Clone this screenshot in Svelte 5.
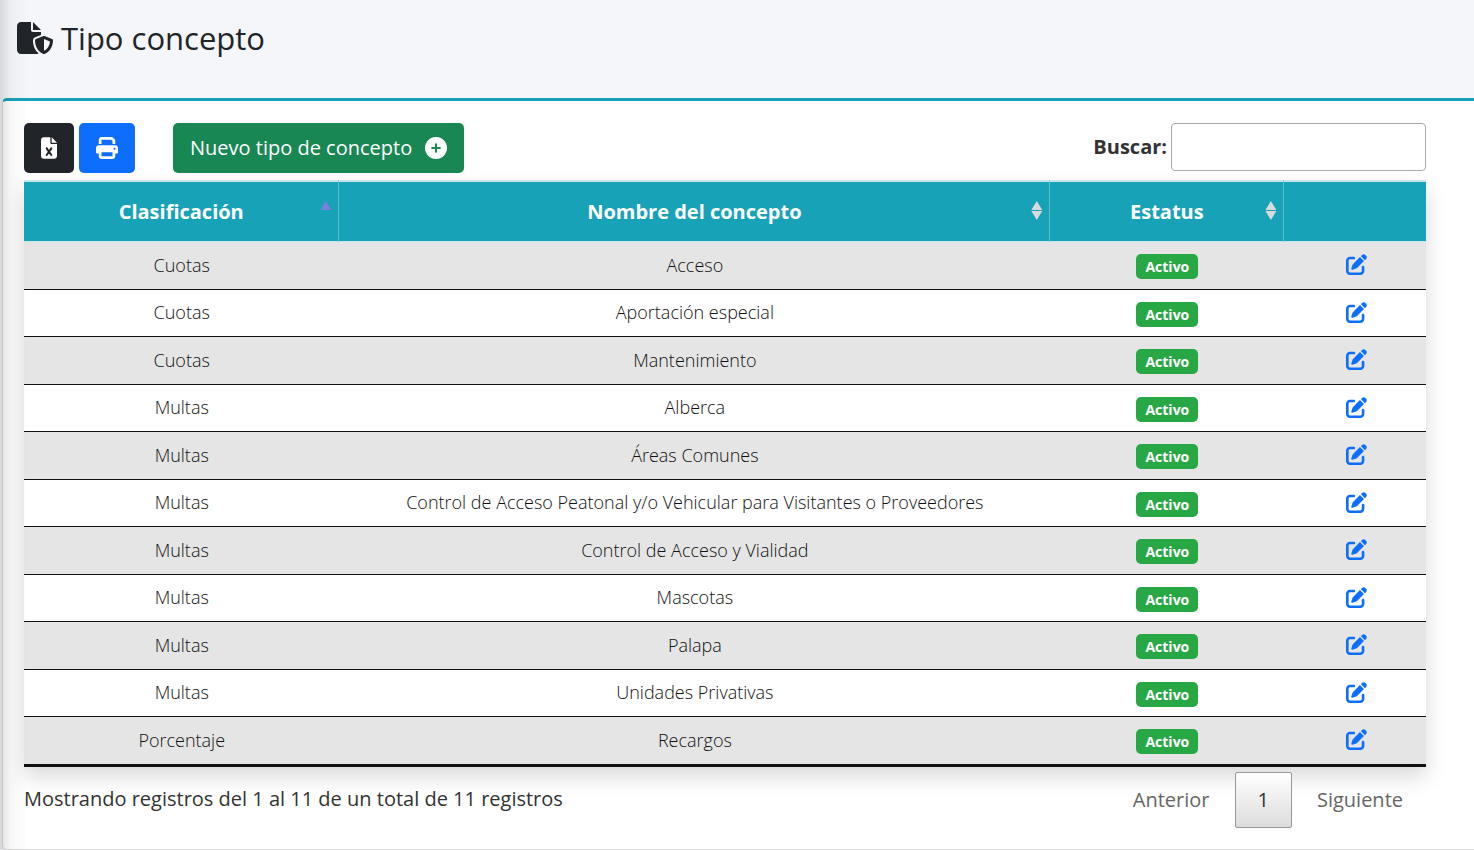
<script lang="ts">
    interface Concepto {
        clasificacion: string;
        nombre: string;
        estatus: string;
    }

    const conceptos: Concepto[] = [
        { clasificacion: 'Cuotas', nombre: 'Acceso', estatus: 'Activo' },
        { clasificacion: 'Cuotas', nombre: 'Aportación especial', estatus: 'Activo' },
        { clasificacion: 'Cuotas', nombre: 'Mantenimiento', estatus: 'Activo' },
        { clasificacion: 'Multas', nombre: 'Alberca', estatus: 'Activo' },
        { clasificacion: 'Multas', nombre: 'Áreas Comunes', estatus: 'Activo' },
        {
            clasificacion: 'Multas',
            nombre: 'Control de Acceso Peatonal y/o Vehicular para Visitantes o Proveedores',
            estatus: 'Activo',
        },
        { clasificacion: 'Multas', nombre: 'Control de Acceso y Vialidad', estatus: 'Activo' },
        { clasificacion: 'Multas', nombre: 'Mascotas', estatus: 'Activo' },
        { clasificacion: 'Multas', nombre: 'Palapa', estatus: 'Activo' },
        { clasificacion: 'Multas', nombre: 'Unidades Privativas', estatus: 'Activo' },
        { clasificacion: 'Porcentaje', nombre: 'Recargos', estatus: 'Activo' },
    ];

    let search = $state('');

    let filtered = $derived(
        conceptos.filter((c) =>
            `${c.clasificacion} ${c.nombre} ${c.estatus}`.toLowerCase().includes(search.toLowerCase())
        )
    );
</script>

<main>
    <header>
        <h1>
            <svg class="title-icon" viewBox="0 0 576 512" aria-hidden="true">
                <path d="M0 64C0 28.7 28.7 0 64 0H224V128c0 17.7 14.3 32 32 32H384v47l-92.8 37.1c-21.3 8.5-35.2 29.1-35.2 52c0 56.6 18.9 148 94.2 208.3c-9 4.8-19.3 7.6-30.2 7.6H64c-35.3 0-64-28.7-64-64V64zm384 64H256V0L384 128zm39.1 97.7c5.7-2.3 12.1-2.3 17.8 0l120 48C570 277.4 576 286.2 576 296c0 63.3-25.9 168.8-134.8 214.2c-5.9 2.5-12.6 2.5-18.5 0C313.9 464.8 288 359.3 288 296c0-9.8 6-18.6 15.1-22.3l120-48zM527.4 312L432 273.8V461.7c68.2-33 91.5-99 95.4-149.7z" />
            </svg>
            Tipo concepto
        </h1>
    </header>

    <section class="card">
        <div class="toolbar">
            <button class="btn dark" aria-label="Exportar a Excel">
                <svg viewBox="0 0 384 512" width="17" height="22">
                    <path d="M64 0C28.7 0 0 28.7 0 64V448c0 35.3 28.7 64 64 64H320c35.3 0 64-28.7 64-64V160H256c-17.7 0-32-14.3-32-32V0H64zM256 0V128H384L256 0zM155.7 250.2L192 302.1l36.3-51.9c7.6-10.9 22.6-13.5 33.4-5.9s13.5 22.6 5.9 33.4L221.3 344l46.4 66.2c7.6 10.9 5 25.8-5.9 33.4s-25.8 5-33.4-5.9L192 385.8l-36.3 51.9c-7.6 10.9-22.6 13.5-33.4 5.9s-13.5-22.6-5.9-33.4L162.7 344l-46.4-66.2c-7.6-10.9-5-25.8 5.9-33.4s25.8-5 33.4 5.9z" />
                </svg>
            </button>
            <button class="btn blue" aria-label="Imprimir">
                <svg viewBox="0 0 512 512" width="22" height="22">
                    <path d="M128 0C92.7 0 64 28.7 64 64v96h64V64H354.7L384 93.3V160h64V93.3c0-17-6.7-33.3-18.7-45.3L400 18.7C388 6.7 371.7 0 354.7 0H128zM384 352v32 64H128V384 368 352H384zm64 32h32c17.7 0 32-14.3 32-32V256c0-35.3-28.7-64-64-64H64c-35.3 0-64 28.7-64 64v96c0 17.7 14.3 32 32 32H64v64c0 35.3 28.7 64 64 64H384c35.3 0 64-28.7 64-64V384zM432 248a24 24 0 1 1 0 48 24 24 0 1 1 0-48z" />
                </svg>
            </button>
            <button class="btn green">
                Nuevo tipo de concepto
                <svg viewBox="0 0 512 512" width="22" height="22" aria-hidden="true">
                    <path d="M256 512A256 256 0 1 0 256 0a256 256 0 1 0 0 512zM232 344V280H168c-13.3 0-24-10.7-24-24s10.7-24 24-24h64V168c0-13.3 10.7-24 24-24s24 10.7 24 24v64h64c13.3 0 24 10.7 24 24s-10.7 24-24 24H280v64c0 13.3-10.7 24-24 24s-24-10.7-24-24z" />
                </svg>
            </button>
            <label class="search">
                Buscar:
                <input type="search" bind:value={search} />
            </label>
        </div>

        <table>
            <colgroup>
                <col class="col-class" />
                <col />
                <col class="col-status" />
                <col class="col-action" />
            </colgroup>
            <thead>
                <tr>
                    <th class="asc" aria-sort="ascending">Clasificación</th>
                    <th class="both">Nombre del concepto</th>
                    <th class="both">Estatus</th>
                    <th></th>
                </tr>
            </thead>
            <tbody>
                {#each filtered as concepto}
                    <tr>
                        <td>{concepto.clasificacion}</td>
                        <td>{concepto.nombre}</td>
                        <td><span class="badge">{concepto.estatus}</span></td>
                        <td>
                            <a href="#editar" aria-label="Editar {concepto.nombre}">
                                <svg viewBox="0 0 512 512" width="21" height="21">
                                    <path d="M471.6 21.7c-21.9-21.9-57.3-21.9-79.2 0L362.3 51.7l97.9 97.9 30.1-30.1c21.9-21.9 21.9-57.3 0-79.2L471.6 21.7zm-299.2 220c-6.1 6.1-10.8 13.6-13.5 21.9l-29.6 88.8c-2.9 8.6-.6 18.1 5.8 24.6s15.9 8.7 24.6 5.8l88.8-29.6c8.2-2.7 15.7-7.4 21.9-13.5L437.7 172.3 339.7 74.3 172.4 241.7zM96 64C43 64 0 107 0 160V416c0 53 43 96 96 96H352c53 0 96-43 96-96V320c0-17.7-14.3-32-32-32s-32 14.3-32 32v96c0 17.7-14.3 32-32 32H96c-17.7 0-32-14.3-32-32V160c0-17.7 14.3-32 32-32h96c17.7 0 32-14.3 32-32s-14.3-32-32-32H96z" />
                                </svg>
                            </a>
                        </td>
                    </tr>
                {/each}
            </tbody>
        </table>

        <footer>
            <p>Mostrando registros del 1 al {filtered.length} de un total de {conceptos.length} registros</p>
            <nav aria-label="Paginación">
                <button class="page" disabled>Anterior</button>
                <button class="page current" aria-current="page">1</button>
                <button class="page" disabled>Siguiente</button>
            </nav>
        </footer>
    </section>
</main>

<style>
    :global(body) {
        margin: 0;
        background: #f4f6f9;
    }

    main {
        position: relative;
        box-sizing: border-box;
        min-height: 100vh;
        padding: 0 0 1px 2px;
        overflow: hidden;
        font-family: 'Open Sans', 'Noto Sans', sans-serif;
        font-size: 20px;
        line-height: 30px;
        color: #212529;
    }
    /* shadow cast by the sidebar */
    main::after {
        content: '';
        position: absolute;
        top: 0;
        bottom: 0;
        left: 0;
        width: 28px;
        background: linear-gradient(to right, rgba(0, 0, 0, 0.12), rgba(0, 0, 0, 0.03) 40%, transparent);
        pointer-events: none;
    }

    header {
        box-sizing: border-box;
        height: 98px;
        padding: 18px 15px;
    }
    h1 {
        display: flex;
        align-items: center;
        gap: 8px;
        margin: 0;
        font-size: 31px;
        font-weight: 500;
        line-height: 40px;
    }
    svg {
        display: block;
        fill: currentColor;
    }
    .title-icon {
        width: 36px;
        height: 32px;
    }

    .card {
        padding: 22px 48px 21px 21px;
        background: #fff;
        border: 1px solid #dcdcdc;
        border-width: 3px 0 1px 1px;
        border-top-color: #17a2b8;
        border-radius: 5px 0 0 5px;
    }

    .toolbar {
        display: flex;
        align-items: flex-start;
        gap: 5px;
        margin-bottom: 7px;
    }
    .btn {
        display: flex;
        align-items: center;
        justify-content: center;
        gap: 13px;
        height: 50px;
        padding: 0 17px;
        border: 0;
        border-radius: 5px;
        color: #fff;
        font: inherit;
        cursor: pointer;
    }
    .dark {
        width: 50px;
        background: #212529;
    }
    .blue {
        background: #0d6efd;
    }
    .green {
        margin-left: 33px;
        background: #198754;
    }

    .search {
        display: flex;
        align-items: center;
        gap: 4px;
        margin-left: auto;
        color: #333;
        font-weight: 700;
    }
    .search input {
        box-sizing: border-box;
        width: 255px;
        height: 48px;
        padding: 6px;
        border: 1px solid #aaa;
        border-radius: 4px;
        outline: none;
        background: transparent;
        color: inherit;
        font: inherit;
        font-weight: 400;
    }

    table {
        width: 100%;
        table-layout: fixed;
        border-collapse: separate;
        border-spacing: 0;
        border-bottom: 2px solid #111;
        background: #fff;
        box-shadow: 0 10px 20px rgba(0, 0, 0, 0.15);
        text-align: center;
    }
    .col-class {
        width: 22.5%;
    }
    .col-status {
        width: 16.7%;
    }
    .col-action {
        width: 10.1%;
    }
    th {
        position: relative;
        height: 58px;
        padding: 1px 20px 0;
        border-top: 2px solid #c6e6ec;
        border-bottom: 1px solid #c6e6ec;
        border-right: 1px solid #5dbecd;
        background: #17a2b8;
        color: #fff;
        font-weight: 700;
        cursor: pointer;
    }
    th:last-child {
        border-right: 0;
    }
    .asc::before,
    .both::before,
    .both::after {
        content: '';
        position: absolute;
        right: 7px;
        top: 19px;
        width: 11px;
        height: 9px;
        background: #d8dadc;
        clip-path: polygon(50% 0, 100% 100%, 0 100%);
    }
    .asc::before {
        background: #7a80dc;
    }
    .both::after {
        top: 29px;
        clip-path: polygon(0 0, 100% 0, 50% 100%);
    }

    td {
        height: 44px;
        padding: 0 0 2px;
        border-bottom: 1px solid #111;
        color: #111;
        font-size: 18px;
        font-weight: 300;
    }
    tr:nth-child(odd) td {
        height: 45px;
        background: #e5e5e5;
    }
    td a {
        display: inline-block;
        padding: 0 0 4px 2px;
        color: #0d6efd;
        vertical-align: middle;
    }
    .badge {
        display: inline-block;
        padding: 0 9px;
        border-radius: 5px;
        background: #28a745;
        color: #fff;
        font-size: 14px;
        font-weight: 700;
        line-height: 25px;
        vertical-align: middle;
    }

    footer {
        display: flex;
        align-items: flex-start;
        justify-content: space-between;
        padding-top: 5px;
        color: #333;
    }
    footer p {
        margin: 12px 0 0;
    }
    nav {
        display: flex;
        gap: 2px;
    }
    .page {
        height: 56px;
        padding: 0 22px;
        border: 1px solid transparent;
        border-radius: 2px;
        background: transparent;
        color: #666;
        font: inherit;
    }
    .current {
        border-color: #979797;
        background: linear-gradient(to bottom, #fff, #dcdcdc);
        color: #333;
        cursor: pointer;
    }
</style>
